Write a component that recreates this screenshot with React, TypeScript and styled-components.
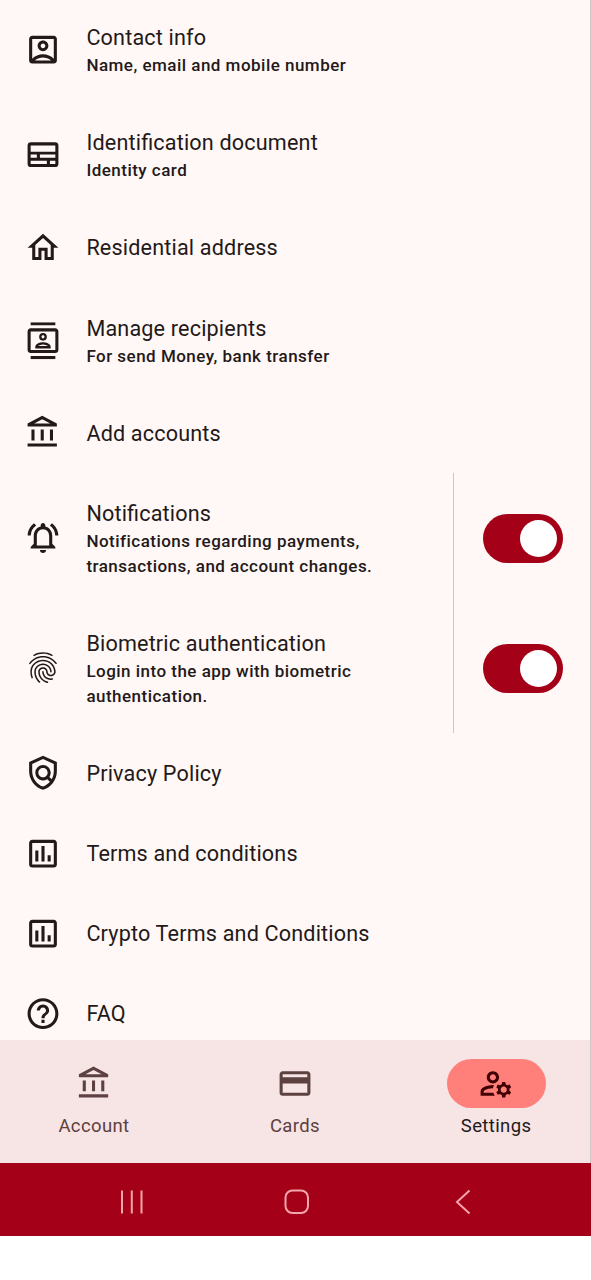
import React from "react";
import styled, { createGlobalStyle } from "styled-components";
import {
  MdOutlineAccountBox,
  MdOutlineHome,
  MdOutlineContacts,
  MdOutlineAccountBalance,
  MdOutlineNotificationsActive,
  MdFingerprint,
  MdOutlinePolicy,
  MdOutlineAssessment,
  MdHelpOutline,
  MdOutlineCreditCard,
  MdOutlineManageAccounts,
} from "react-icons/md";

const GlobalStyle = createGlobalStyle`
  * { box-sizing: border-box; }
  body { margin: 0; background: #ffffff; font-family: Roboto, "Liberation Sans", sans-serif; }
`;

const Screen = styled.div`
  display: flex;
  flex-direction: column;
  width: 591px;
  height: 1280px;
  overflow: hidden;
  background: #ffffff;
`;

const Body = styled.div`
  display: flex;
  flex-direction: column;
  height: 1163px;
  flex: none;
  border-right: 1px solid #d3c8c8;
  background: #fff8f6;
`;

const List = styled.main`
  display: flex;
  flex-direction: column;
  height: 1039.5px;
  flex: none;
  overflow: hidden;
`;

const Row = styled.div<{ $height?: number; $trim?: number }>`
  display: flex;
  align-items: center;
  flex: none;
  height: ${(p) => p.$height ?? 80.3}px;
  margin-top: ${(p) => -(p.$trim ?? 0)}px;
  padding: 0 27.2px 0 24.2px;
  color: #231919;
`;

const IconSlot = styled.span`
  display: flex;
  flex: none;
  width: 37px;
  height: 37px;
  margin: 0 25.2px 0.8px 0;
  svg { width: 37px; height: 37px; transform: translate(0.5px, 0.2px); }
`;

const Texts = styled.div`
  width: 330px;
  flex: none;
`;

const Title = styled.div`
  padding-top: 0.8px;
  font-size: 21.6px;
  line-height: 30.1px;
  letter-spacing: 0.17px;
  font-feature-settings: "liga" 1;
  white-space: nowrap;
`;

const Subtitle = styled.div`
  font-size: 17px;
  font-weight: 500;
  line-height: 24.7px;
  letter-spacing: 0.48px;
  white-space: pre-line;
`;

const Control = styled.div`
  display: flex;
  align-items: center;
  justify-content: flex-end;
  flex: 1;
  height: 100%;
  margin-left: 36.6px;
  border-left: 1px solid #d0c4c4;
`;

const Switch = styled.span`
  display: flex;
  align-items: center;
  justify-content: flex-end;
  width: 80px;
  height: 49.2px;
  padding-right: 5.7px;
  border-radius: 25px;
  background: #a40018;
`;

const Thumb = styled.span`
  width: 37.2px;
  height: 37.2px;
  border-radius: 50%;
  background: #ffffff;
`;

const Tabs = styled.nav`
  display: flex;
  gap: 13.2px;
  height: 123.5px;
  flex: none;
  padding-top: 19px;
  background: #f7e4e4;
`;

const Tab = styled.div<{ $active?: boolean }>`
  display: flex;
  flex-direction: column;
  align-items: center;
  flex: 1;
  color: ${(p) => (p.$active ? "#231919" : "#5d4040")};
`;

const Pill = styled.span<{ $active?: boolean; $nudge: number }>`
  display: flex;
  align-items: center;
  justify-content: center;
  width: 99px;
  height: 49.4px;
  border-radius: 25px;
  background: ${(p) => (p.$active ? "#ff807b" : "transparent")};
  color: ${(p) => (p.$active ? "#410004" : "inherit")};
  svg { width: 37px; height: 37px; transform: translateX(${(p) => p.$nudge}px); }
`;

const TabLabel = styled.span`
  margin-top: 6.4px;
  font-size: 18.5px;
  line-height: 24.7px;
  letter-spacing: 0.38px;
`;

const SystemBar = styled.footer`
  display: flex;
  justify-content: space-between;
  align-items: center;
  height: 73px;
  flex: none;
  padding: 4px 110px 0 113px;
  background: #a40018;
  svg { width: 36px; height: 36px; }
`;

const IdCardIcon = () => (
  <svg viewBox="0 0 24 24" fill="none" stroke="currentColor" strokeWidth="2">
    <rect x="3" y="5" width="18" height="14" rx="1.2" />
    <path d="M3 11h18M3 15h18" strokeWidth="1.9" />
    <path d="M9 11v4M15.500 15v4" />
  </svg>
);

type Item = {
  icon: React.ReactNode;
  title: string;
  subtitle?: string;
  height?: number;
  trim?: number;
  toggle?: boolean;
};

const items: Item[] = [
  { icon: <MdOutlineAccountBox />, title: "Contact info", subtitle: "Name, email and mobile number", height: 105.1, trim: 2.4 },
  { icon: <IdCardIcon />, title: "Identification document", subtitle: "Identity card", height: 105.1 },
  { icon: <MdOutlineHome />, title: "Residential address" },
  { icon: <MdOutlineContacts />, title: "Manage recipients", subtitle: "For send Money, bank transfer", height: 105.1 },
  { icon: <MdOutlineAccountBalance />, title: "Add accounts" },
  {
    icon: <MdOutlineNotificationsActive />,
    title: "Notifications",
    subtitle: "Notifications regarding payments,\ntransactions, and account changes.",
    height: 129.8,
    toggle: true,
  },
  {
    icon: <MdFingerprint />,
    title: "Biometric authentication",
    subtitle: "Login into the app with biometric\nauthentication.",
    height: 129.8,
    toggle: true,
  },
  { icon: <MdOutlinePolicy />, title: "Privacy Policy" },
  { icon: <MdOutlineAssessment />, title: "Terms and conditions" },
  { icon: <MdOutlineAssessment />, title: "Crypto Terms and Conditions" },
  { icon: <MdHelpOutline />, title: "FAQ" },
];

const tabs = [
  { icon: <MdOutlineAccountBalance />, label: "Account", nudge: 0.8 },
  { icon: <MdOutlineCreditCard />, label: "Cards", nudge: -0.5 },
  { icon: <MdOutlineManageAccounts />, label: "Settings", nudge: -0.5, active: true },
];

export default function App() {
  return (
    <Screen>
      <GlobalStyle />
      <Body>
        <List>
          {items.map((item) => (
            <Row key={item.title} $height={item.height} $trim={item.trim}>
              <IconSlot>{item.icon}</IconSlot>
              <Texts>
                <Title>{item.title}</Title>
                {item.subtitle && <Subtitle>{item.subtitle}</Subtitle>}
              </Texts>
              {item.toggle && (
                <Control>
                  <Switch role="switch" aria-checked="true">
                    <Thumb />
                  </Switch>
                </Control>
              )}
            </Row>
          ))}
        </List>
        <Tabs>
          {tabs.map((tab) => (
            <Tab key={tab.label} $active={tab.active}>
              <Pill $active={tab.active} $nudge={tab.nudge}>{tab.icon}</Pill>
              <TabLabel>{tab.label}</TabLabel>
            </Tab>
          ))}
        </Tabs>
      </Body>
      <SystemBar>
        <svg viewBox="0 0 36 36" fill="none" stroke="#f3a5ab" strokeWidth="2">
          <path d="M9 6.500v23M18.800 6.500v23M28.500 6.500v23" />
        </svg>
        <svg viewBox="0 0 36 36" fill="none" stroke="#f3a5ab" strokeWidth="2">
          <rect x="6.500" y="6.500" width="22.500" height="22.500" rx="7" />
        </svg>
        <svg viewBox="0 0 36 36" fill="none" stroke="#f3a5ab" strokeWidth="2">
          <path d="M24.500 6.500L12 18L24.500 29.500" />
        </svg>
      </SystemBar>
    </Screen>
  );
}
